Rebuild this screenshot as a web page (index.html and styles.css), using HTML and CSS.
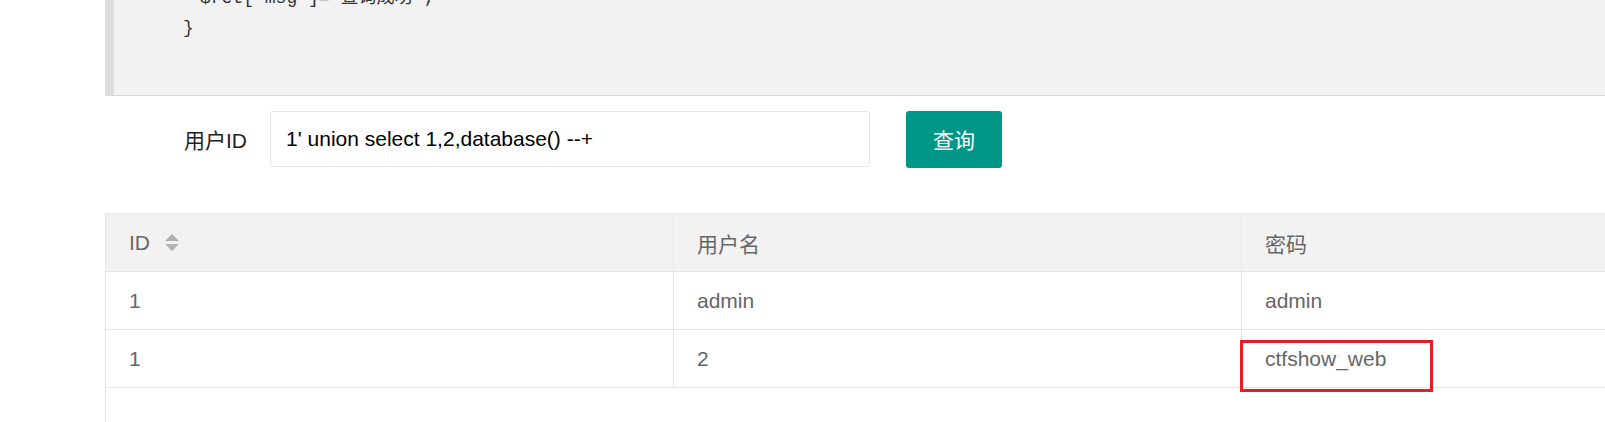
FILE: index.html
```html
<!DOCTYPE html>
<html lang="zh-CN">
<head>
<meta charset="utf-8">
<title>查询</title>
<link rel="stylesheet" href="styles.css">
</head>
<body>
<div class="page">
  <div class="code">
    <ol class="code-lines">
      <li class="indent">$ret['msg']='查询成功';</li>
      <li>}</li>
    </ol>
  </div>

  <form class="form-row">
    <label class="form-label">用户ID</label>
    <input class="form-input" type="text" value="1' union select 1,2,database() --+">
    <button class="btn" type="button">查询</button>
  </form>

  <div class="table-box">
    <table class="data-table">
      <thead>
        <tr>
          <th class="col-fixed">ID <span class="sort"><i class="sort-up"></i><i class="sort-down"></i></span></th>
          <th>用户名</th>
          <th>密码</th>
        </tr>
      </thead>
      <tbody>
        <tr>
          <td class="col-fixed">1</td>
          <td>admin</td>
          <td>admin</td>
        </tr>
        <tr>
          <td class="col-fixed">1</td>
          <td>2</td>
          <td>ctfshow_web</td>
        </tr>
      </tbody>
    </table>
    <div class="highlight"></div>
  </div>
</div>
</body>
</html>
```

FILE: styles.css
```css
html, body {
  margin: 0;
  padding: 0;
  background: #fff;
  overflow: hidden;
}

body {
  font-family: "Liberation Sans", Arial, "Noto Sans CJK SC", sans-serif;
  color: #333;
}

.page {
  padding-left: 105px;
  width: 1800px;
}

/* code block */
.code {
  height: 95px;
  overflow: hidden;
  background: #f2f2f2;
  border-left: 9px solid #dddddd;
  border-bottom: 1px solid #d9d9d9;
  box-sizing: content-box;
}

.code-lines {
  list-style: none;
  margin: -17px 0 0 0;
  padding: 0 0 0 69px;
  font-family: "Liberation Mono", "Courier New", "Noto Sans CJK SC", monospace;
  font-size: 18px;
  line-height: 30px;
  color: #333;
}

.code-lines .indent {
  padding-left: 17px;
}

/* form */
.form-row {
  display: flex;
  align-items: center;
  margin: 15px 0 0 0;
  height: 56px;
}

.form-label {
  width: 142px;
  text-align: right;
  font-size: 21px;
  color: #222;
  margin-right: 23px;
}

.form-input {
  box-sizing: border-box;
  width: 600px;
  height: 56px;
  border: 1px solid #e6e6e6;
  border-radius: 3px;
  padding: 0 15px;
  font-family: "Liberation Sans", Arial, sans-serif;
  font-size: 21px;
  color: #000;
  background: #fff;
  outline: none;
  margin-right: 36px;
}

.btn {
  box-sizing: border-box;
  width: 96px;
  height: 57px;
  border: none;
  border-radius: 3px;
  background: #009688;
  color: #fff;
  font-family: "Noto Sans CJK SC", sans-serif;
  font-size: 21px;
  padding: 0;
}

/* table */
.table-box {
  position: relative;
  margin-top: 46px;
  height: 230px;
  border-left: 1px solid #e6e6e6;
}

.data-table {
  border-collapse: collapse;
  table-layout: fixed;
  width: 1703px;
  margin-left: -1px;
  font-size: 21px;
  color: #666;
}

.data-table th,
.data-table td {
  height: 58px;
  box-sizing: border-box;
  padding: 0 23px;
  border: 1px solid #e6e6e6;
  text-align: left;
  font-weight: normal;
  vertical-align: middle;
  background: #fff;
}

.data-table thead th {
  background: #f2f2f2;
}

.data-table th:nth-child(1),
.data-table td:nth-child(1) {
  width: 568px;
}

.data-table th:nth-child(2),
.data-table td:nth-child(2) {
  width: 568px;
}

.col-fixed {
  position: relative;
  z-index: 1;
  box-shadow: 1px 1px 6px rgba(0, 0, 0, 0.05);
}

.sort {
  display: inline-flex;
  flex-direction: column;
  gap: 3px;
  vertical-align: middle;
  margin-left: 9px;
  margin-top: -3px;
}

.sort i {
  display: block;
  width: 0;
  height: 0;
  border-left: 7px solid transparent;
  border-right: 7px solid transparent;
}

.sort-up {
  border-bottom: 7px solid #b2b2b2;
}

.sort-down {
  border-top: 7px solid #b2b2b2;
}

/* annotation */
.highlight {
  position: absolute;
  left: 1134px;
  top: 127px;
  width: 193px;
  height: 52px;
  box-sizing: border-box;
  border: 3px solid #ec1c24;
  z-index: 2;
}
```
